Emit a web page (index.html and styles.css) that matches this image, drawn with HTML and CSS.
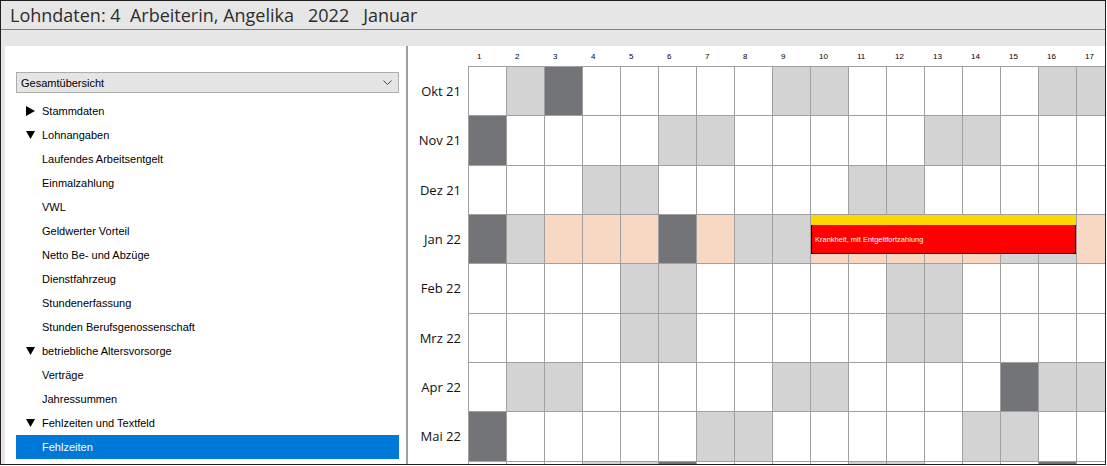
FILE: index.html
```html
<!DOCTYPE html>
<html lang="de">
<head>
    <meta charset="UTF-8">
    <title>Lohndaten</title>
    <link rel="stylesheet" href="styles.css">
</head>
<body>
    <div class="window">
        <header class="titlebar">
            <h1 class="title">Lohndaten: 4  Arbeiterin, Angelika   2022   Januar</h1>
        </header>
        <div class="toolbar"></div>

        <div class="main">
            <aside class="sidebar">
                <div class="select">
                    <span>Gesamtübersicht</span>
                    <svg class="chevron" width="9" height="5" viewBox="0 0 9 5"><polyline points="0.5,0.5 4.5,4.5 8.5,0.5" fill="none" stroke="#444" stroke-width="1"/></svg>
                </div>
                <ul class="tree">
                    <li class="node"><svg class="arrow" width="9" height="10" viewBox="0 0 9 10"><polygon points="0,0 9,5 0,10" fill="#000"/></svg>Stammdaten</li>
                    <li class="node"><svg class="arrow" width="9" height="10" viewBox="0 0 9 10"><polygon points="0,1 9,1 4.5,9" fill="#000"/></svg>Lohnangaben</li>
                    <li class="leaf">Laufendes Arbeitsentgelt</li>
                    <li class="leaf">Einmalzahlung</li>
                    <li class="leaf">VWL</li>
                    <li class="leaf">Geldwerter Vorteil</li>
                    <li class="leaf">Netto Be- und Abzüge</li>
                    <li class="leaf">Dienstfahrzeug</li>
                    <li class="leaf">Stundenerfassung</li>
                    <li class="leaf">Stunden Berufsgenossenschaft</li>
                    <li class="node"><svg class="arrow" width="9" height="10" viewBox="0 0 9 10"><polygon points="0,1 9,1 4.5,9" fill="#000"/></svg>betriebliche Altersvorsorge</li>
                    <li class="leaf">Verträge</li>
                    <li class="leaf">Jahressummen</li>
                    <li class="node"><svg class="arrow" width="9" height="10" viewBox="0 0 9 10"><polygon points="0,1 9,1 4.5,9" fill="#000"/></svg>Fehlzeiten und Textfeld</li>
                    <li class="leaf selected">Fehlzeiten</li>
                </ul>
            </aside>

            <section class="calendar">
                <div class="days" id="days"></div>
                <div class="body">
                    <div class="months" id="months"></div>
                    <div class="board" id="board">
                        <div class="absence">
                            <div class="absence-flag"></div>
                            <div class="absence-label">Krankheit, mit Entgeltfortzahlung</div>
                        </div>
                    </div>
                </div>
            </section>
        </div>
    </div>

    <script>
        // . = Arbeitstag, l = Wochenende, d = Feiertag, p = aktueller Monat
        const rows = [
            ['Okt 21', '.ld.....ll.....ll'],
            ['Nov 21', 'd....ll.....ll...'],
            ['Dez 21', '...ll.....ll.....'],
            ['Jan 22', 'dlpppdpllpppppllp'],
            ['Feb 22', '....ll.....ll....'],
            ['Mrz 22', '....ll.....ll....'],
            ['Apr 22', '.ll.....ll....dll'],
            ['Mai 22', 'd.....ll.....ll..'],
            ['', '...lld....ll...d.']   // Jun 22, Beschriftung liegt ausserhalb
        ];
        const names = { '.': 'free', 'l': 'weekend', 'd': 'holiday', 'p': 'current' };

        const days = document.getElementById('days');
        for (let i = 1; i <= 17; i++) {
            const span = document.createElement('span');
            span.textContent = i;
            days.appendChild(span);
        }

        const months = document.getElementById('months');
        const board = document.getElementById('board');
        const absence = board.querySelector('.absence');

        rows.forEach(([label, pattern]) => {
            const month = document.createElement('div');
            month.className = 'month';
            month.textContent = label;
            months.appendChild(month);

            pattern.split('').forEach(code => {
                const cell = document.createElement('div');
                cell.className = 'cell ' + names[code];
                board.insertBefore(cell, absence);
            });
        });
    </script>
</body>
</html>
```

FILE: styles.css
```css
body {
    margin: 0;
    background: #fff;
}

.window {
    width: 1106px;
    height: 465px;
    box-sizing: border-box;
    border: 1px solid #1f1f1f;
    background: #e6e6e6;
    display: flex;
    flex-direction: column;
    overflow: hidden;
}

.titlebar {
    height: 28px;
    border-bottom: 1px solid #808080;
    display: flex;
    align-items: center;
    padding-left: 9px;
}

.title {
    margin: 0;
    font: normal 18px "Open Sans", sans-serif;
    color: #2d2d2d;
    white-space: pre;
}

.toolbar {
    height: 16px;
}

.main {
    flex: 1;
    min-height: 0;
    display: flex;
    padding-left: 4px;
}

/* Navigation */
.sidebar {
    flex: 0 0 auto;
    width: 403px;
    box-sizing: border-box;
    padding: 26px 0 0 11px;
    background: #fff;
    border-right: 2px solid #a0a0a0;
    font: 11px "Liberation Sans", Arial, sans-serif;
    color: #000;
}

.select {
    width: 383px;
    height: 21px;
    box-sizing: border-box;
    border: 1px solid #adadad;
    background: #e5e5e5;
    display: flex;
    align-items: center;
    justify-content: space-between;
    padding: 0 6px 0 4px;
}

.tree {
    list-style: none;
    margin: 6px 0 0;
    padding: 0;
    width: 383px;
}

.tree li {
    height: 24px;
    display: flex;
    align-items: center;
}

.node {
    padding-left: 10px;
}

.arrow {
    margin-right: 7px;
}

.leaf {
    padding-left: 26px;
}

.selected {
    background: #0078d7;
    color: #fff;
}

/* Kalender */
.calendar {
    flex: 1;
    min-width: 0;
    overflow: hidden;
    background: #fff;
}

.days {
    display: grid;
    grid-template-columns: repeat(17, 38px);
    margin-left: 60px;
    height: 20px;
    align-items: center;
    font: 8px "Liberation Sans", Arial, sans-serif;
    color: #000;
}

.days span {
    padding-left: 9px;
}

.body {
    display: flex;
    align-items: flex-start;
}

.months {
    flex: 0 0 60px;
    padding-top: 1px;
}

.month {
    height: 49.33px;
    display: flex;
    align-items: center;
    justify-content: flex-end;
    padding-right: 7px;
    box-sizing: border-box;
    padding-bottom: 1px;
    font: 13px "Open Sans", sans-serif;
    color: #111;
}

.board {
    position: relative;
    flex-shrink: 0;
    display: grid;
    grid-template-columns: repeat(17, 37px);
    grid-auto-rows: 48.33px;
    gap: 1px;
    padding: 1px;
    background: #a0a0a0;
}

.cell.free { background: #fff; }
.cell.weekend { background: #d3d3d3; }
.cell.holiday { background: #737477; }
.cell.current { background: #f9d8c3; }

.absence {
    position: absolute;
    left: 343px;
    top: 149px;
    width: 265px;
}

.absence-flag {
    height: 10px;
    background: #ffd700;
}

.absence-label {
    height: 29px;
    box-sizing: border-box;
    background: #ff0000;
    border: 1px solid #000;
    border-top: none;
    color: #fff;
    font: 7.5px "Liberation Sans", Arial, sans-serif;
    display: flex;
    align-items: center;
    padding-left: 3px;
}
```
